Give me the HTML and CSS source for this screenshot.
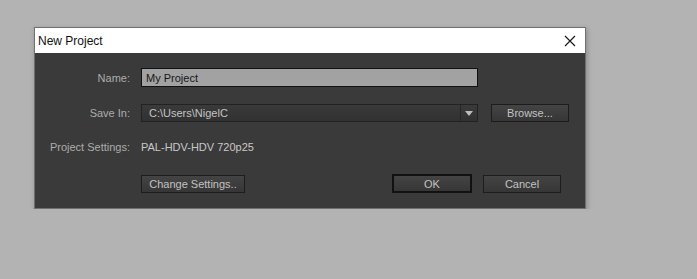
FILE: index.html
```html
<!DOCTYPE html>
<html lang="en">
<head>
  <meta charset="UTF-8" />
  <title>New Project</title>
  <link rel="stylesheet" href="styles.css">
</head>
<body>
  <div class="dialog">
    <div class="titlebar">
      <span class="title">New Project</span>
      <svg class="close" width="12" height="12" viewBox="0 0 12 12">
        <path d="M1 1 L11 11 M11 1 L1 11" stroke="#1a1a1a" stroke-width="1.2" fill="none"/>
      </svg>
    </div>

    <div class="content">
      <div class="row row-name">
        <label class="label">Name:</label>
        <input class="text-input" type="text" value="My Project">
      </div>

      <div class="row row-save">
        <label class="label">Save In:</label>
        <div class="select">
          <span class="select-text">C:\Users\NigelC</span>
          <span class="select-arrow">
            <svg width="8" height="5" viewBox="0 0 8 5"><path d="M0 0 H8 L4 5 Z" fill="#bdbdbd"/></svg>
          </span>
        </div>
        <button class="btn btn-browse">Browse...</button>
      </div>

      <div class="row row-settings">
        <span class="label">Project Settings:</span>
        <span class="value">PAL-HDV-HDV 720p25</span>
      </div>

      <div class="row row-actions">
        <span class="label"></span>
        <button class="btn btn-change">Change Settings..</button>
        <span class="spacer"></span>
        <button class="btn btn-ok">OK</button>
        <button class="btn btn-cancel">Cancel</button>
      </div>
    </div>
  </div>
</body>
</html>
```

FILE: styles.css
```css
* {
  box-sizing: border-box;
  margin: 0;
  padding: 0;
}

body {
  background: #b3b3b3;
  font-family: "Liberation Sans", Arial, sans-serif;
  padding: 27px 0 0 34px;
}

.dialog {
  width: 552px;
  border: 1px solid #6f6f6f;
  background: #3a3a3a;
  box-shadow: 1px 2px 5px rgba(0,0,0,0.25);
}

.titlebar {
  height: 25px;
  background: #fff;
  display: flex;
  align-items: center;
  justify-content: space-between;
  padding: 0 9px 0 3px;
}

.title {
  font-size: 12px;
  color: #111;
}

.close {
  display: block;
  margin-top: 1px;
}

.content {
  padding: 15px 15px 15px 0;
}

.row {
  display: flex;
  align-items: center;
}

.label {
  width: 95px;
  margin-right: 11px;
  text-align: right;
  font-size: 11px;
  color: #acacac;
  flex-shrink: 0;
}

.text-input {
  width: 337px;
  height: 19px;
  border: 1px solid #111;
  background: #a2a2a2;
  color: #161616;
  font-family: inherit;
  font-size: 11px;
  padding: 0 4px;
  outline: none;
}

.row-save {
  margin-top: 17px;
}

.select {
  width: 337px;
  height: 18px;
  display: flex;
  border: 1px solid #222;
  background: linear-gradient(#3a3a3a, #313131);
}

.select-text {
  flex: 1;
  font-size: 11px;
  color: #c4c4c4;
  padding-left: 7px;
  line-height: 16px;
}

.select-arrow {
  width: 17px;
  border-left: 1px solid #262626;
  display: flex;
  align-items: center;
  justify-content: center;
}

.btn {
  height: 18px;
  border: 1px solid #1c1c1c;
  background: linear-gradient(#444, #363636);
  color: #c2c2c2;
  font-family: inherit;
  font-size: 11px;
}

.btn-browse {
  width: 78px;
  margin-left: 13px;
}

.row-settings {
  margin-top: 16px;
  height: 18px;
}

.value {
  font-size: 11px;
  color: #c8c8c8;
}

.row-actions {
  margin-top: 18px;
}

.btn-change {
  width: 104px;
}

.spacer {
  flex: 1;
}

.btn-ok {
  width: 80px;
  border: 2px solid #111;
  height: 19px;
}

.btn-cancel {
  width: 78px;
  margin-left: 11px;
  margin-right: 9px;
}
```
